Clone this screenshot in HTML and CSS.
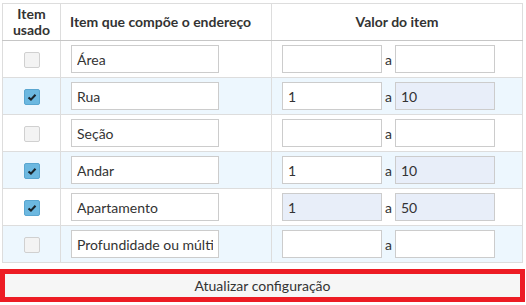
FILE: index.html
```html
<!DOCTYPE html>
<html>
<head>
  <meta name="viewport" content="width=device-width">
  <title>Configuração do endereço</title>
  <link rel="stylesheet" href="styles.css">
</head>
<body>
<div class="page">
<table class="grid">
  <colgroup>
    <col class="c-usado">
    <col class="c-nome">
    <col class="c-valor">
  </colgroup>
  <tr>
    <th class="usado">Item<br>usado</th>
    <th class="nome">Item que compõe o endereço</th>
    <th class="valor">Valor do item</th>
  </tr>
  <tr>
    <td class="check"><span class="box"></span></td>
    <td><input class="nome-in" value="Área"></td>
    <td class="faixa"><input class="num"><span class="a">a</span><input class="num"></td>
  </tr>
  <tr class="alt">
    <td class="check"><span class="box on"><svg viewBox="0 0 16 16"><path d="M4 8.5 L6.8 11 L12 5.5" /></svg></span></td>
    <td><input class="nome-in" value="Rua"></td>
    <td class="faixa"><input class="num" value="1"><span class="a">a</span><input class="num ro" value="10"></td>
  </tr>
  <tr>
    <td class="check"><span class="box"></span></td>
    <td><input class="nome-in" value="Seção"></td>
    <td class="faixa"><input class="num"><span class="a">a</span><input class="num"></td>
  </tr>
  <tr class="alt">
    <td class="check"><span class="box on"><svg viewBox="0 0 16 16"><path d="M4 8.5 L6.8 11 L12 5.5" /></svg></span></td>
    <td><input class="nome-in" value="Andar"></td>
    <td class="faixa"><input class="num" value="1"><span class="a">a</span><input class="num ro" value="10"></td>
  </tr>
  <tr>
    <td class="check"><span class="box on"><svg viewBox="0 0 16 16"><path d="M4 8.5 L6.8 11 L12 5.5" /></svg></span></td>
    <td><input class="nome-in" value="Apartamento"></td>
    <td class="faixa"><input class="num ro" value="1"><span class="a">a</span><input class="num ro" value="50"></td>
  </tr>
  <tr class="alt">
    <td class="check"><span class="box"></span></td>
    <td><input class="nome-in" value="Profundidade ou múltiplo"></td>
    <td class="faixa"><input class="num"><span class="a">a</span><input class="num"></td>
  </tr>
</table>

<button class="atualizar">Atualizar configuração</button>
</div>
</body>
</html>
```

FILE: styles.css
```css
body {
    margin: 0;
    font-family: Lato, "Liberation Sans", sans-serif;
    font-size: 14px;
    color: #333;
    background: #fff;
}
.page { padding: 3px 0 0 0; }

.grid {
    border-collapse: collapse;
    table-layout: fixed;
    margin-left: 2px;
    width: 520px;
}
.c-usado { width: 58px; }
.c-nome { width: 211px; }
.c-valor { width: 251px; }

.grid th {
    font-weight: bold;
    border: 1px solid #ddd;
    border-bottom: 1px solid #c6c6c6;
    height: 36px;
    padding: 0 8px;
    line-height: 16px;
}
.grid th.usado { padding: 0; text-align: center; }
.grid th.nome { text-align: left; padding-left: 9px; }
.grid th.valor { text-align: center; }

.grid td {
    border: 1px solid #ddd;
    padding: 4px 10px;
    height: 28px;
}
.grid tr.alt td { background: #edf7fe; }
.grid td.check { text-align: center; padding: 0; }

.box {
    display: inline-block;
    width: 14px;
    height: 14px;
    border: 1px solid #d0d0d0;
    border-radius: 2px;
    background: #f3f3f3;
    vertical-align: middle;
}
.box.on {
    background: #6cb8e0;
    border-color: #5aa6d0;
}
.box svg { width: 14px; height: 14px; display: block; }
.box path { fill: none; stroke: #1b242b; stroke-width: 2.4; }

input {
    font: inherit;
    color: #333;
    border: 1px solid #ccc;
    background: #fff;
    height: 28px;
    box-sizing: border-box;
    padding: 0 5px;
    margin: 0;
    vertical-align: middle;
    outline: none;
}
.nome-in { width: 148px; }
.num { width: 100px; }
.num.ro { background: #e8eef9; }
.faixa { white-space: nowrap; }
.a { display: inline-block; width: 13px; text-align: center; vertical-align: middle; }

.atualizar {
    display: block;
    margin-top: 6px;
    width: 525px;
    height: 33px;
    border: 5px solid #ed1c24;
    background: #f6f6f6;
    font: inherit;
    color: #333;
    padding: 0;
}
```
